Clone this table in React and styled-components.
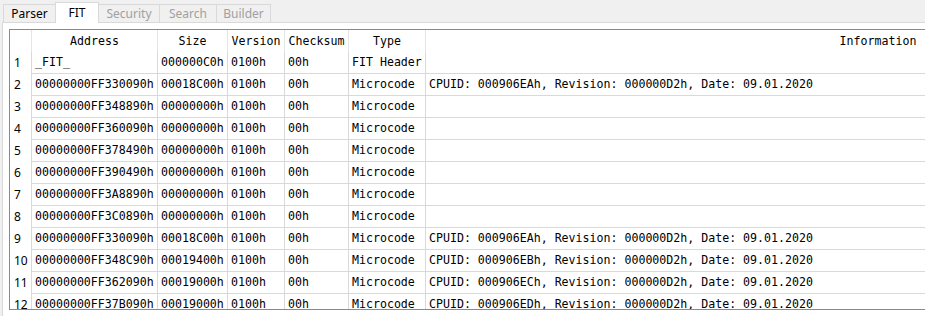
import React from "react";
import styled, {createGlobalStyle} from "styled-components";

const Global = createGlobalStyle`
  html, body {
    margin: 0;
    padding: 0;
    background: #f0f0f0;
  }
`

const Page = styled.div`
  width: 925px;
  height: 316px;
  overflow: hidden;
  background: #f0f0f0;
  font-family: "Noto Sans", "Liberation Sans", sans-serif;
`
const TabBar = styled.div`
  display: flex;
  align-items: flex-end;
  height: 22px;
  padding-left: 3px;
`
const Tab = styled.div`
  position: relative;
  box-sizing: border-box;
  width: ${p => p.$w}px;
  height: ${p => p.$active ? 21 : 18}px;
  margin-right: -1px;
  margin-bottom: ${p => p.$active ? -1 : 0}px;
  z-index: ${p => p.$active ? 2 : 1};
  border: 1px solid #d9d9d9;
  border-bottom: none;
  background: ${p => p.$active ? '#ffffff' : '#f0f0f0'};
  color: ${p => p.$disabled ? '#a0a0a0' : '#000000'};
  font-size: 12px;
  text-align: center;
  line-height: ${p => p.$active ? 20 : 18}px;
`
const Pane = styled.div`
  margin-left: 2px;
  padding: 6px 0 0 6px;
  background: #ffffff;
  border: 1px solid #d9d9d9;
  border-right: none;
  height: 300px;
  box-sizing: border-box;
`
const Table = styled.div`
  box-sizing: border-box;
  height: 281px;
  width: 1400px;
  overflow: hidden;
  border: 1px solid #8a8a8a;
  border-right: none;
  display: grid;
  grid-template-columns: 22px 126px 70px 57px 64px 77px 905px;
  grid-auto-rows: min-content;
  align-content: start;
  font-family: "DejaVu Sans Mono", "Liberation Mono", monospace;
  font-size: 11.6px;
  color: #000;
`
const Head = styled.div`
  box-sizing: border-box;
  height: 22px;
  line-height: 22px;
  border-right: 1px solid #e5e5e5;
  text-align: center;
  white-space: nowrap;
  overflow: hidden;
`
const RowNum = styled.div`
  box-sizing: border-box;
  height: 22px;
  line-height: 21px;
  padding-left: 4px;
  border-right: 1px solid #d9d9d9;
  font-family: "Noto Sans", "Liberation Sans", sans-serif;
  font-size: 12px;
`
const Cell = styled.div`
  box-sizing: border-box;
  height: 22px;
  line-height: 21px;
  padding-left: 3px;
  border-right: 1px solid #d9d9d9;
  border-bottom: 1px solid #d9d9d9;
  white-space: nowrap;
  overflow: hidden;
`

const headers = ['', 'Address', 'Size', 'Version', 'Checksum', 'Type', 'Information']

const info = id => `CPUID: ${id}, Revision: 000000D2h, Date: 09.01.2020`

const rows = [
  ['_FIT_', '000000C0h', 'FIT Header', ''],
  ['00000000FF330090h', '00018C00h', 'Microcode', info('000906EAh')],
  ['00000000FF348890h', '00000000h', 'Microcode', ''],
  ['00000000FF360090h', '00000000h', 'Microcode', ''],
  ['00000000FF378490h', '00000000h', 'Microcode', ''],
  ['00000000FF390490h', '00000000h', 'Microcode', ''],
  ['00000000FF3A8890h', '00000000h', 'Microcode', ''],
  ['00000000FF3C0890h', '00000000h', 'Microcode', ''],
  ['00000000FF330090h', '00018C00h', 'Microcode', info('000906EAh')],
  ['00000000FF348C90h', '00019400h', 'Microcode', info('000906EBh')],
  ['00000000FF362090h', '00019000h', 'Microcode', info('000906ECh')],
  ['00000000FF37B090h', '00019000h', 'Microcode', info('000906EDh')],
]

const tabs = [
  {name: 'Parser', w: 53},
  {name: 'FIT', w: 44, active: true},
  {name: 'Security', w: 62, disabled: true},
  {name: 'Search', w: 58, disabled: true},
  {name: 'Builder', w: 55, disabled: true},
]

export default function App() {
  return (
    <Page>
      <Global/>
      <TabBar>
        {tabs.map(t => (
          <Tab key={t.name} $w={t.w} $active={t.active} $disabled={t.disabled}>{t.name}</Tab>
        ))}
      </TabBar>
      <Pane>
        <Table>
          {headers.map((h, i) => <Head key={'h' + i}>{h}</Head>)}
          {rows.map((r, i) => (
            <React.Fragment key={i}>
              <RowNum>{i + 1}</RowNum>
              <Cell>{r[0]}</Cell>
              <Cell>{r[1]}</Cell>
              <Cell>0100h</Cell>
              <Cell>00h</Cell>
              <Cell>{r[2]}</Cell>
              <Cell>{r[3]}</Cell>
            </React.Fragment>
          ))}
        </Table>
      </Pane>
    </Page>
  )
}
